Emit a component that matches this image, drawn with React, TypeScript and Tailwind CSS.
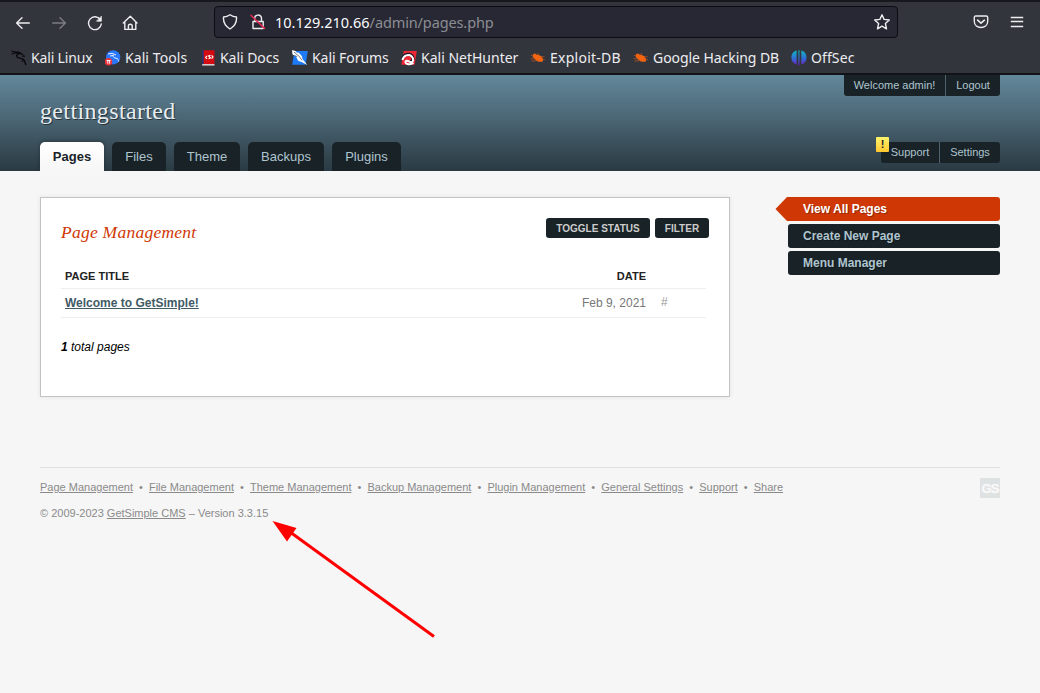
import React from "react";

const stroke = { fill: "none", stroke: "currentColor", strokeWidth: 1.4, strokeLinecap: "round", strokeLinejoin: "round" } as const;

const Dragon = () => (
  <svg width="16" height="16" viewBox="0 0 16 16" fill="none" stroke="#08090c" strokeLinecap="round" strokeLinejoin="round">
    <path d="M.7.9 4 2 7.5 2.100 10.500 3.800M1 4.100l3-1.300 4 .5" strokeWidth="1.100" />
    <path d="M9.500 3.600C6.500 3.200 4.900 5 6.100 7c1 1.700 4.500.6 6.400 2.600 1.300 1.400 1.500 3.100 2.200 5" strokeWidth="1.400" />
    <path d="m10 3.500 2.400 1.300 1.200 1.700-2.100-.4M11 8.800l1.500 2.200-1.600.2" strokeWidth="1" />
  </svg>
);
const Tools = () => (
  <svg width="16" height="16" viewBox="0 0 16 16">
    <circle cx="8.2" cy="7.300" r="7.100" fill="#2777ff" />
    <path d="m3 4 4-.6 4 1.500M5 6l3.500-.6c-1 1.800 1 2.600 2.500 2.800 2 .3 2.500 1.600 2.700 3.300" fill="none" stroke="#e7efff" strokeWidth="1" />
    <circle cx="3.500" cy="11.700" r="3.800" fill="#e9333f" />
    <path d="M1.600 10.500h4M2.800 10.500v3.200M4.600 10.500v3.200" stroke="#fff" strokeWidth=".9" />
  </svg>
);
const Docs = () => (
  <svg width="13" height="16" viewBox="0 0 13 16">
    <path d="M.2.2h2v15h-2z" fill="#26347c" />
    <path d="M1.700.2h10.800v14H1.700z" fill="#d40b12" />
    <path d="M.2 14h12.300v1.600H.2z" fill="#d5c9cc" />
    <path d="M5 5.800 3.600 7.400 5 9M9.600 5.300l1.400 1.700-1.400 1.700M8.500 5.200 6.500 6l2 1.800-2 1" fill="none" stroke="#fff" strokeWidth="1.100" />
  </svg>
);
const Forums = () => (
  <svg width="16" height="16" viewBox="0 0 16 16">
    <path d="M2.400 1h13.400l-2.200 13.800H.2z" fill="#1d7cf5" />
    <path d="M.1.1 3.400 1l1.400 1.500 2 .2 3 3.200.8 3.300 4.800 5.800-5.300-2.700-4-1.500L4 6.400.4 4.200z" fill="#fff" />
    <path d="m2 2.100 5.500 4.500 2.400 3.700M2.400 5.400l2.800 1.300" stroke="#17212d" strokeWidth=".6" fill="none" />
  </svg>
);
const Hunter = () => (
  <svg width="16" height="16" viewBox="0 0 16 16">
    <path d="M2.800 1h13l-2.200 13.700H.3z" fill="#ee2636" />
    <path d="M1.500 8.500C3.500 3.500 9.500 3 11.500 6.500c1.600 3-.5 5.500-3 5" stroke="#181c25" strokeWidth="3" fill="none" />
    <path d="M1.500 10C2.500 5.500 7.500 3.600 10.500 6.200c2.800 2.600 1.800 6-.5 6-1.800 0-2.500-2-4.500-1.500-2 .6-1 3 1 3.300 2 .4 4.500 0 6-1" stroke="#fff" strokeWidth="2" fill="none" />
  </svg>
);
const Bug = () => (
  <svg width="16" height="16" viewBox="0 0 16 16">
    <path d="M3.200 4.200c1-.9 2.400-.8 3.300.3l3 .7c2.400.8 3.900 3.200 3.500 6.100-1.700 1.100-5.300.5-7.100-1.100L4.200 8.600C2.700 7.500 2.200 5.500 3.200 4.200Z" fill="#f36410" />
    <path d="m3 6-2.300-.8M4.200 9.200.6 8.400M6 10.800l-4.700.2M8 5.200 8.400 3M11 6.800l3.500-.2M12.500 9.300l2.500.3" stroke="#d35a1b" strokeWidth=".6" />
  </svg>
);
const OffSec = () => (
  <svg width="16" height="16" viewBox="0 0 16 16">
    <defs><linearGradient id="os" x2="0" y2="1"><stop stopColor="#0ebbc5" /><stop offset=".5" stopColor="#2c74d5" /><stop offset="1" stopColor="#6a20c8" /></linearGradient></defs>
    <path d="M5.600.6v13.800C2.500 13.700.4 11 .4 7.500S2.500 1.300 5.600.6ZM10.300.6c3.300.7 5.200 3.400 5.200 6.900s-1.900 6.200-5.200 6.900ZM7.400.2h1.100v15H7.400z" fill="url(#os)" />
  </svg>
);

const bookmarks = [
  { t: "Kali Linux", w: "w-[94px]", s: "tracking-[-.16px]", I: Dragon },
  { t: "Kali Tools", w: "w-[97px]", s: "tracking-[.08px]", I: Tools },
  { t: "Kali Docs", w: "w-[90px]", s: "tracking-[-.05px]", I: Docs },
  { t: "Kali Forums", w: "w-[109px]", s: "tracking-[-.06px]", I: Forums },
  { t: "Kali NetHunter", w: "w-[129px]", s: "tracking-[0px]", I: Hunter },
  { t: "Exploit-DB", w: "w-[103px]", s: "tracking-[.25px]", I: Bug },
  { t: "Google Hacking DB", w: "w-[158px]", s: "tracking-[-.06px]", I: Bug },
  { t: "OffSec", w: "w-[80px]", s: "tracking-[.1px]", I: OffSec },
];

function Browser() {
  return (
    <div className="h-[75px] border-t-2 border-b-2 border-t-[#17181e] border-b-[#111318] bg-[#33353d] font-['Noto_Sans',sans-serif] text-[#ededf0]">
      <div className="flex h-[40px] items-center pl-[15px]">
        <svg className="mt-px mr-5 shrink-0" width="16" height="16" viewBox="0 0 16 16" {...stroke}><path d="M14.300 8H1.800M7 2.700 1.600 8 7 13.300" /></svg>
        <svg className="mt-px mr-5 shrink-0 text-[#7c7d83]" width="16" height="16" viewBox="0 0 16 16" {...stroke}><path d="M1.700 8h12.500M9 2.700 14.400 8 9 13.300" /></svg>
        <svg className="mt-px mr-[19px] shrink-0" width="16" height="16" viewBox="0 0 16 16" {...stroke}><path d="M13.300 4.700A6.400 6.400 0 1 0 14.300 9" /><path d="M14.400 1.500v4.700H9.800z" fill="currentColor" strokeWidth=".7" /></svg>
        <svg className="mt-px mr-[76px] shrink-0" width="16" height="16" viewBox="0 0 16 16" {...stroke}><path d="M1.300 8 8.300 1.300 15 8M2.800 6.900v7.500h11V6.900M6.400 14.200v-3.500c0-2 3.800-2 3.800 0v3.500" /></svg>
        <div className="flex h-8 w-[684px] shrink-0 items-center rounded border border-[#0b0c12] bg-[#272833] pl-[7px]">
          <svg className="mr-3 shrink-0" width="16" height="16" viewBox="0 0 16 16" {...stroke}><path d="M8 .8c2 1.400 4.100 2.100 6.500 2.200.4 5-1.700 9-6.500 12C3.200 12 1.100 8 1.500 3 3.900 2.900 6 2.200 8 .8Z" /></svg>
          <svg className="mr-[9px] shrink-0" width="16" height="16" viewBox="0 0 16 16" {...stroke}><path d="M4.700 6V4.400c0-4.400 6.800-4.400 6.800-.2V7M3 7.500h10.200v7H3z" /><path d="m1 1.400 13.500 13" stroke="#e22850" strokeWidth="1.500" /></svg>
          <span className="whitespace-pre text-[14.5px] leading-5 text-[#fbfbfe]">10.129.210.66<span className="tracking-[-.12px] text-[#8c8d94]">/admin/pages.php</span></span>
          <svg className="mr-[7px] ml-auto shrink-0" width="16" height="16" viewBox="0 0 16 16" {...stroke}><path d="m8 .8 2.100 4.600 5.200.6-3.900 3.500 1.100 5.300L8 12.200l-4.500 2.600 1.100-5.300L.7 6l5.200-.6z" /></svg>
        </div>
        <svg className="ml-[75px] shrink-0" width="16" height="16" viewBox="0 0 16 16" {...stroke}><path d="M2.800 2h10.400q1.500 0 1.500 1.500v3.800c0 8.200-13.400 8.200-13.400 0V3.500Q1.300 2 2.800 2Z" /><path d="m4.600 6.200 3.400 3 3.400-3" strokeWidth="1.600" /></svg>
        <svg className="ml-5 shrink-0" width="16" height="16" viewBox="0 0 16 16" {...stroke} strokeLinecap="square"><path d="M2.500 3.500h11M2.500 7.500h11M2.500 12.500h11" /></svg>
      </div>
      <div className="flex h-[32px] items-center pl-[11px]">
        {bookmarks.map(({ t, w, s, I }) => (
          <div key={t} className={`flex shrink-0 items-center whitespace-nowrap text-[14px] ${w} ${s}`}><I /><span className={`-mt-[2px] ${t === "Kali Docs" ? "ml-[5px]" : "ml-1"}`}>{t}</span></div>
        ))}
      </div>
    </div>
  );
}

const tabs = [
  { t: "Files", w: "w-[54px]" },
  { t: "Theme", w: "w-[66px]" },
  { t: "Backups", w: "w-[76px]" },
  { t: "Plugins", w: "w-[69px]" },
];

function Header() {
  return (
    <header className="flex h-24 justify-between bg-linear-to-b from-[#63899b] via-[#486270] via-50% to-[#2a3a43] px-10 text-[#afc5cf]">
      <div className="flex flex-col">
        <h1 className="mt-[22px] h-[45px] font-['Liberation_Serif',serif] text-[24px] leading-[29px] tracking-[.36px] text-[#e8edf0] [text-shadow:1px_1px_0_#26343c]">gettingstarted</h1>
        <nav className="flex gap-2 text-[13px]">
          <a className="flex h-[29px] w-16 items-center justify-center rounded-t-[5px] bg-linear-to-b from-white to-[#f6f6f6] font-bold text-[#182227] shadow-[0_-1px_4px_rgba(0,0,0,.3)]">Pages</a>
          {tabs.map(({ t, w }) => <a key={t} className={`flex h-[29px] items-center justify-center rounded-t-[5px] bg-[#182227] ${w}`}>{t}</a>)}
        </nav>
      </div>
      <div className="flex flex-col items-end justify-between pb-2 text-[11px]">
        <div className="flex h-[21px] w-[156px] overflow-hidden rounded-b-[3px] bg-[#182227]">
          <a className="flex w-[102px] items-center justify-center border-r border-[#50626c]">Welcome admin!</a>
          <a className="flex flex-1 items-center justify-center">Logout</a>
        </div>
        <div className="relative flex h-[21px] w-[119px] rounded-[3px] bg-[#182227]">
          <b className="absolute -top-[5px] -left-[5px] flex h-[15px] w-[13px] items-center justify-center rounded-[1px] bg-linear-to-b from-[#fff46a] to-[#ffc72e] text-[11px] text-[#182227]">!</b>
          <a className="flex w-[59px] items-center justify-center border-r border-[#50626c]">Support</a>
          <a className="flex flex-1 items-center justify-center">Settings</a>
        </div>
      </div>
    </header>
  );
}

const links = ["Page Management", "File Management", "Theme Management", "Backup Management", "Plugin Management", "General Settings", "Support", "Share"];

export default function App() {
  return (
    <div className="relative h-[693px] w-[1040px] overflow-hidden bg-[#f6f6f6] font-['Liberation_Sans',sans-serif]">
      <Browser />
      <Header />
      <main className="relative flex h-[296px] items-start justify-between bg-[#f6f6f6] px-10 pt-[26px]">
        <section className="h-[200px] w-[690px] border border-[#c3c3c3] bg-white px-5 pt-5 shadow-[0_0_5px_rgba(0,0,0,.08)]">
          <div className="flex h-[49px] items-start justify-between">
            <h2 className="mt-[3px] font-['Liberation_Serif',serif] text-[17.5px] leading-[22px] tracking-[.25px] text-[#cf3805] italic">Page Management</h2>
            <div className="flex gap-[5px] text-[10px] font-bold text-[#ccc]">
              <a className="flex h-5 w-[104px] items-center justify-center rounded-[3px] bg-[#182227]">TOGGLE STATUS</a>
              <a className="flex h-5 w-[54px] items-center justify-center rounded-[3px] bg-[#182227]">FILTER</a>
            </div>
          </div>
          <div className="w-[645px] text-[12px]">
            <div className="flex h-[22px] justify-between border-b border-[#eee] pr-[60px] pl-1 text-[11px] leading-[19px] font-bold text-[#222]"><span>PAGE TITLE</span><span>DATE</span></div>
            <div className="flex h-[29px] border-b border-[#eee] pl-1 leading-7 text-[#777]">
              <a className="font-bold text-[#415a66] underline">Welcome to GetSimple!</a>
              <span className="ml-auto">Feb 9, 2021</span>
              <span className="w-[60px] pl-[15px] text-[12px] leading-[26px] text-[#999]">#</span>
            </div>
          </div>
          <p className="mt-[21px] text-[12px] leading-4 text-black italic"><b>1</b> total pages</p>
        </section>
        <aside className="flex w-[212px] flex-col gap-[3px] text-[12px] font-bold text-[#afc5cf] [text-shadow:1px_1px_0_rgba(0,0,0,.3)]">
          <a className="relative flex h-6 items-center rounded-r-[3px] bg-[#cf3805] pl-[15px] text-white">
            <svg className="absolute top-0 -left-[13px]" width="14" height="24"><path d="M14 0h-2L.5 12 12 24h2z" fill="#cf3805" /></svg>
            View All Pages
          </a>
          <a className="flex h-6 items-center rounded-[3px] bg-[#182227] pl-[15px]">Create New Page</a>
          <a className="flex h-6 items-center rounded-[3px] bg-[#182227] pl-[15px]">Menu Manager</a>
        </aside>
      </main>
      <footer className="mx-10 flex justify-between border-t border-[#e0e0e0] pt-[10px] text-[11px] leading-[18px] text-[#8a8a8a]">
        <div>
          <p className="flex h-[26px] whitespace-pre">
            {links.map((l, i) => <React.Fragment key={l}>{i > 0 && <span className="w-4 text-center">•</span>}<a className="underline">{l}</a></React.Fragment>)}
          </p>
          <p>© 2009-2023 <a className="underline">GetSimple CMS</a> – Version 3.3.15</p>
        </div>
        <b className="flex h-5 w-5 items-center justify-center bg-[#dfe2e2] pt-px text-[13px] tracking-[-.8px] text-[#f8f8f8] [-webkit-text-stroke:.4px_#f8f8f8]">GS</b>
      </footer>
      <svg className="absolute top-[515px] left-[268px]" width="172" height="128">
        <path d="M22 17 166 121.500" stroke="#f00" strokeWidth="3" />
        <path d="m4.500 6 24 7-9.500 13.500z" fill="#f00" />
      </svg>
    </div>
  );
}
